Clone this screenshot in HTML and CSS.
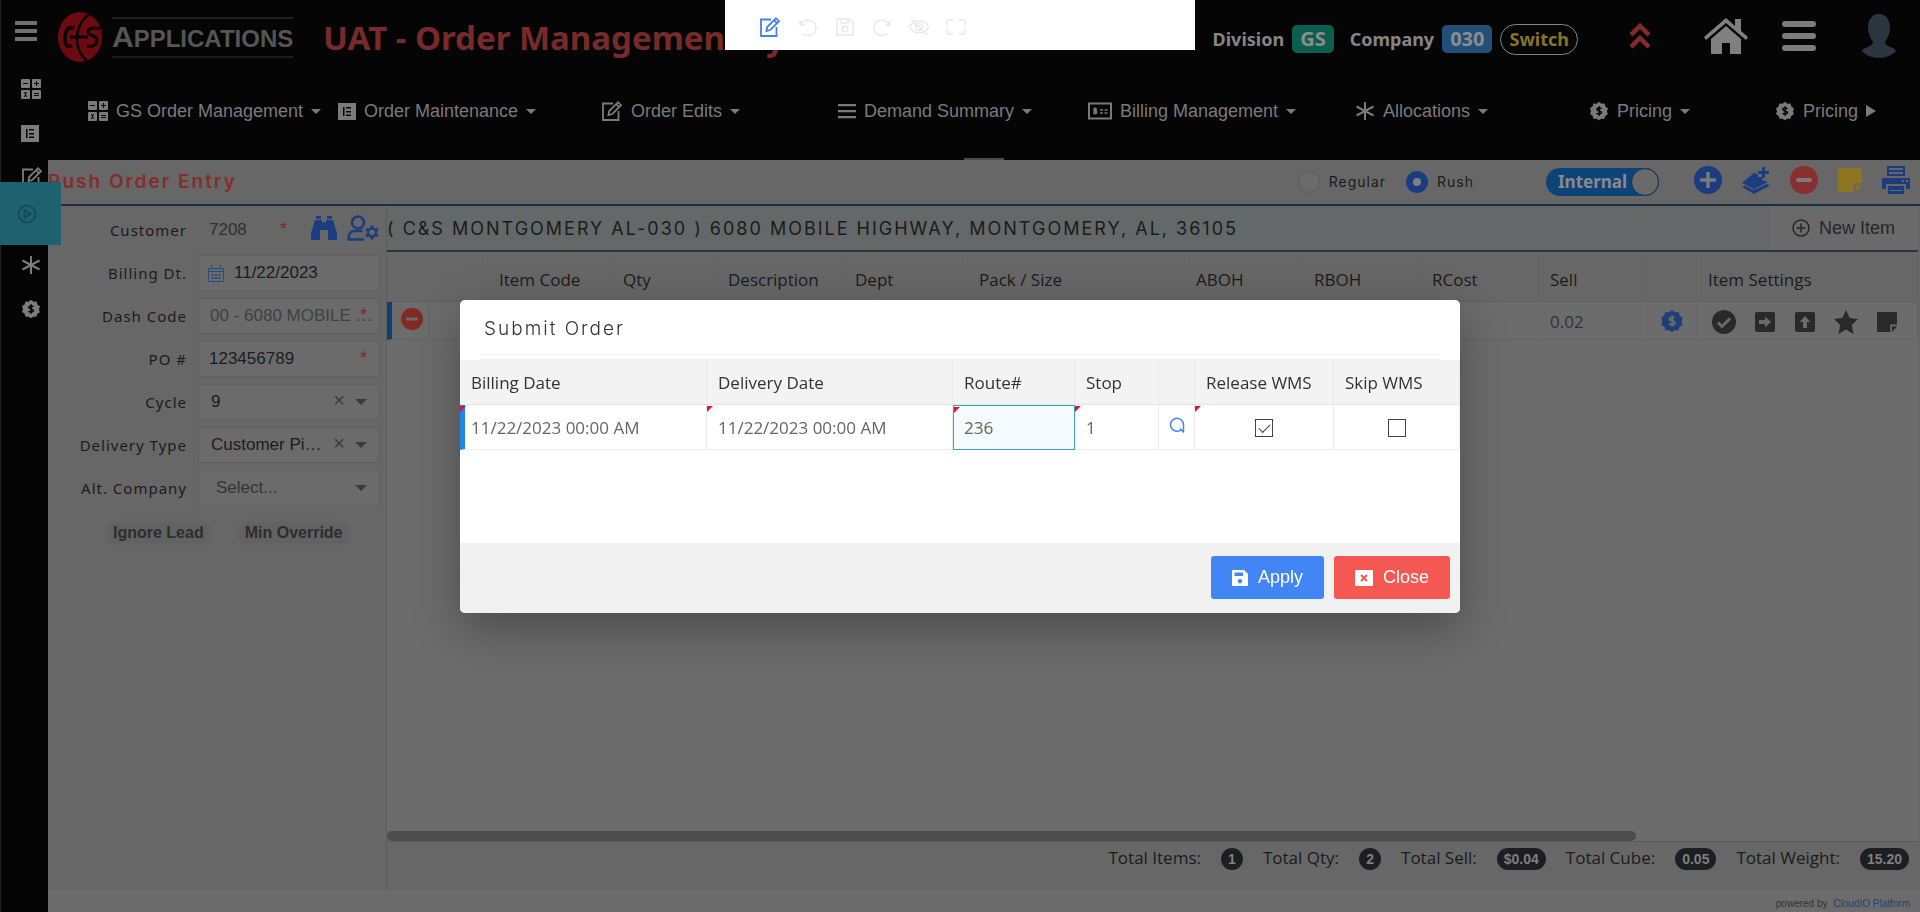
FILE: index.html
```html
<!DOCTYPE html>
<html lang="en">
<head>
<meta charset="utf-8">
<title>UAT - Order Management System</title>
<link rel="stylesheet" href="styles.css">
</head>
<body>
<svg class="defs" aria-hidden="true">
  <symbol id="i-grid" viewBox="0 0 20 20"><path fill-rule="evenodd" fill="currentColor" d="M1 0h7a1 1 0 0 1 1 1v7a1 1 0 0 1-1 1H1a1 1 0 0 1-1-1V1a1 1 0 0 1 1-1zM2 4v1h5V4zM12 0h7a1 1 0 0 1 1 1v7a1 1 0 0 1-1 1h-7a1 1 0 0 1-1-1V1a1 1 0 0 1 1-1zM15 2v2h-2v1h2v2h1V5h2V4h-2V2zM1 11h7a1 1 0 0 1 1 1v7a1 1 0 0 1-1 1H1a1 1 0 0 1-1-1v-7a1 1 0 0 1 1-1zM3 13l1 2.500-1 2.500h1l.5-1.500L5 18h1l-1-2.500L6 13H5l-.5 1.500L4 13zM12 11h7a1 1 0 0 1 1 1v7a1 1 0 0 1-1 1h-7a1 1 0 0 1-1-1v-7a1 1 0 0 1 1-1zM13 14v1h5v-1zM13 16v1h5v-1z"/></symbol>
  <symbol id="i-list" viewBox="0 0 18 18"><path fill-rule="evenodd" fill="currentColor" d="M0 1h18v17H0zM5 5v9h1.500V5zM8 5v1.500h5V5zM8 9v1.500h5V9zM8 12.500V14h5v-1.500z"/></symbol>
  <symbol id="i-edit" viewBox="0 0 22 22"><g fill="none" stroke="currentColor" stroke-width="1.800"><path d="M12 3.500H2V20h15.500v-9"/><path d="M7.500 15l.7-4L17 2.200l3 3L11.300 14z"/><path d="M15 4.200l3 3"/></g></symbol>
  <symbol id="i-bars" viewBox="0 0 18 16"><path fill="currentColor" d="M0 1h18v2.200H0zM0 7h18v2.200H0zM0 13h18v2.200H0z"/></symbol>
  <symbol id="i-bill" viewBox="0 0 24 18"><rect x="1" y="1.500" width="22" height="15" fill="none" stroke="currentColor" stroke-width="2"/><path fill="none" stroke="currentColor" stroke-width="1.500" d="M9 7H6v2h2.500v2H5M7.200 5.500v7M12 8h3M16.500 8h3M12 11h3M16.500 11h3"/></symbol>
  <symbol id="i-star6" viewBox="0 0 20 20"><path stroke="currentColor" stroke-width="2" d="M10 1v18M1.500 5.500l17 9M18.500 5.500l-17 9"/></symbol>
  <symbol id="i-seal" viewBox="0 0 24 24"><path fill="currentColor" d="M12 1l3 2.200 3.700-.1 1 3.500L22.800 9l-1.300 3.400 1.100 3.500-3.100 2-1.200 3.500-3.700-.1L12 23.200l-2.900-2-3.700.1-1.100-3.500-3.100-2.100 1.200-3.500L1.200 8.800l3.100-2.200 1-3.500L9 3.200z"/><path class="knock" fill="none" stroke-width="1.800" d="M15 9.200c-1-1.200-5.600-1.500-5.600.8 0 2.600 5.600 1.300 5.600 3.900 0 2.300-4.600 2.200-6 .7M12.200 6.200v11.600"/></symbol>
  <symbol id="i-play" viewBox="0 0 20 20"><g fill="none" stroke="currentColor" stroke-width="1.600"><circle cx="10" cy="10" r="8.500"/><path d="M7.500 6v8l6-4z"/></g></symbol>
  <symbol id="i-minus" viewBox="0 0 28 28"><circle cx="14" cy="14" r="14" fill="currentColor"/><path class="knock" stroke-width="4" stroke-linecap="round" d="M8 14h12"/></symbol>
  <symbol id="i-plus" viewBox="0 0 28 28"><circle cx="14" cy="14" r="14" fill="currentColor"/><path class="knock" stroke-width="3.500" d="M6 14h16M14 6v16"/></symbol>
  <symbol id="i-note" viewBox="0 0 24 24"><path fill="currentColor" d="M1 0h22a1 1 0 0 1 1 1v14h-8v9H1a1 1 0 0 1-1-1V1a1 1 0 0 1 1-1zM18 17h6l-6 7z"/></symbol>
</svg>

<header class="top">
  <div class="brand-row">
    <div class="logo">
      <svg class="logo-mark" viewBox="0 0 44 50" aria-hidden="true"><ellipse cx="22" cy="25" rx="22" ry="25" fill="#6b0a10"/><g fill="none" stroke="#0a0405"><path stroke-width="2.500" d="M33 1C15 13 15 37 29 49"/><path stroke-width="3.500" d="M16 16C9 14 7 20 7 27s3 8 7 7"/><path stroke-width="3" d="M12 25h18M42 17c-7-2-12-1-12 3s9 3 9 8-4 7-10 6"/></g></svg>
      <span class="logo-text"><b>A</b>PPLICATIONS</span>
    </div>
    <h1 class="app-title">UAT - Order Management System</h1>
    <div class="context">
      <span>Division</span><span class="tag tag-green">GS</span>
      <span class="ctx-company">Company</span><span class="tag tag-blue">030</span>
      <button class="switch" type="button">Switch</button>
    </div>
    <div class="top-icons">
      <button type="button" aria-label="Collapse" class="tb"><svg class="i-chev" viewBox="0 0 20 26"><path d="M1 12l9-9 9 9M1 24l9-9 9 9" fill="none" stroke="#842a2e" stroke-width="4.500"/></svg></button>
      <button type="button" aria-label="Home" class="tb"><svg class="i-home" viewBox="0 0 44 36"><path fill="#808080" d="M22 0l9 8V1h6v12l7 6-2 3L22 5 2 22l-2-3zM22 8l15 13v15H26V25h-8v11H7V21z"/></svg></button>
      <button type="button" aria-label="Menu" class="tb"><svg class="i-menu" viewBox="0 0 34 30"><path d="M3 3h28M3 15h28M3 27h28" stroke="#7c7c7c" stroke-width="6" stroke-linecap="round"/></svg></button>
      <button type="button" aria-label="Profile" class="tb"><svg class="i-user" viewBox="0 0 34 44"><path fill="#2b3640" d="M17 0c7 0 11 6 11 13 0 6-2 11-5 15 0 5 10 5 11 9-4 4-10 7-17 7S3 41 0 37c1-4 11-4 11-9-3-4-5-9-5-15C6 6 10 0 17 0z"/></svg></button>
    </div>
  </div>
  <nav class="nav">
    <a href="#"><svg class="ic20"><use href="#i-grid"/></svg>GS Order Management<i class="caret"></i></a>
    <a href="#"><svg class="ic18"><use href="#i-list"/></svg>Order Maintenance<i class="caret"></i></a>
    <a href="#"><svg class="ic22"><use href="#i-edit"/></svg>Order Edits<i class="caret"></i></a>
    <a href="#"><svg class="ic18"><use href="#i-bars"/></svg>Demand Summary<i class="caret"></i></a>
    <a href="#"><svg class="ic24"><use href="#i-bill"/></svg>Billing Management<i class="caret"></i></a>
    <a href="#"><svg class="ic20"><use href="#i-star6"/></svg>Allocations<i class="caret"></i></a>
    <a href="#"><svg class="ic20"><use href="#i-seal"/></svg>Pricing<i class="caret"></i></a>
    <a href="#"><svg class="ic20"><use href="#i-seal"/></svg>Pricing<i class="caret-right"></i></a>
  </nav>
  <span class="grip"></span>
</header>

<aside class="side">
  <button type="button" class="side-menu" aria-label="Toggle menu"><svg viewBox="0 0 22 20"><path d="M1 2h20M1 10h20M1 18h20" stroke="#707070" stroke-width="4" stroke-linecap="round"/></svg></button>
  <ul>
    <li><a href="#" aria-label="Order management"><svg class="ic20"><use href="#i-grid"/></svg></a></li>
    <li><a href="#" aria-label="Maintenance"><svg class="ic18"><use href="#i-list"/></svg></a></li>
    <li><a href="#" aria-label="Edits"><svg class="ic22"><use href="#i-edit"/></svg></a></li>
    <li><a href="#" class="current" aria-label="Run"><svg class="ic20"><use href="#i-play"/></svg></a></li>
    <li><a href="#" aria-label="Allocations"><svg class="ic20"><use href="#i-star6"/></svg></a></li>
    <li><a href="#" aria-label="Pricing"><svg class="ic20"><use href="#i-seal"/></svg></a></li>
  </ul>
</aside>

<main class="page">
  <section class="page-head">
    <h2>Rush Order Entry</h2>
    <label class="radio"><input type="radio" name="kind"><span>Regular</span></label>
    <label class="radio"><input type="radio" name="kind" checked><span>Rush</span></label>
    <label class="toggle"><span>Internal</span><input type="checkbox" checked></label>
    <div class="actions">
      <button type="button" aria-label="Add"><svg class="ic28 blue"><use href="#i-plus"/></svg></button>
      <button type="button" aria-label="Add layer"><svg class="ic28 blue" viewBox="0 0 28 28"><path fill="currentColor" d="M12 7l4 1.500V11h4v3l6 2-14 7-12-6zM0 21l3-1.500 9 4.500 13-6 3 1.500L12 28zM20 1h3v4h4v3h-4v4h-3V8h-4V5h4z"/></svg></button>
      <button type="button" aria-label="Remove"><svg class="ic28 red"><use href="#i-minus"/></svg></button>
      <button type="button" aria-label="Note"><svg class="ic24 yellow"><use href="#i-note"/></svg></button>
      <button type="button" aria-label="Print"><svg class="ic28 blue" viewBox="0 0 28 28"><path fill="currentColor" fill-rule="evenodd" d="M5 0h18v10H5zM7 2v2h14V2zM7 6v2h14V6zM0 12h28v11h-4v-5H4v5H0zM20 14v2h2v-2zM24 14v2h2v-2zM6 20h16v8H6zM8 25h12v-1H8z"/></svg></button>
    </div>
  </section>

  <div class="cols">
    <form class="panel">
      <div class="row"><label for="cust">Customer</label>
        <div class="field bare"><input id="cust" value="7208"><em>*</em>
          <button type="button" aria-label="Find"><svg class="ic26 blue" viewBox="0 0 26 24"><path fill="currentColor" d="M5 0h5v3H5zM16 0h5v3h-5zM4 4h7v5h4V4h7l4 13v7h-9V14H9v10H0v-7zM11.500 6h3v6h-3z"/></svg></button>
          <button type="button" aria-label="Customer settings"><svg class="i-cust blue" viewBox="0 0 32 26"><g fill="none" stroke="currentColor" stroke-width="2.500"><circle cx="11" cy="7.500" r="6"/><path d="M17 24.500H1.500c0-7 3-8.500 6-8.500h8"/><circle cx="25" cy="17.500" r="4"/></g><path stroke="currentColor" stroke-width="3" d="M25 10.500v3M25 21.500v3M19 14l2.500 1.500M28.500 19.500L31 21M19 21l2.500-1.500M28.500 15.500L31 14"/></svg></button>
        </div></div>
      <div class="row"><label for="bill">Billing Dt.</label>
        <div class="field"><svg class="i-cal" viewBox="0 0 16 17" aria-hidden="true"><g fill="none" stroke="currentColor"><path d="M.5 3.500h15v13H.5zM.5 6.500h15M3.500 0v4M12.500 0v4"/><path stroke-width="2" stroke-dasharray="2 1.500" d="M3.500 10h9.500M3.500 13h9.500"/></g></svg><input id="bill" value="11/22/2023"></div></div>
      <div class="row"><label for="dash">Dash Code</label>
        <div class="field muted"><input id="dash" value="00 - 6080 MOBILE HIGHWAY" readonly><em>*</em></div></div>
      <div class="row"><label for="po">PO #</label>
        <div class="field"><input id="po" value="123456789"><em>*</em></div></div>
      <div class="row"><label for="cycle">Cycle</label>
        <div class="field pick"><select id="cycle"><option>9</option></select><button type="button" class="clear" aria-label="Clear">×</button><i class="caret"></i></div></div>
      <div class="row"><label for="deliv">Delivery Type</label>
        <div class="field pick"><select id="deliv"><option>Customer Pickup</option></select><button type="button" class="clear" aria-label="Clear">×</button><i class="caret"></i></div></div>
      <div class="row"><label for="alt">Alt. Company</label>
        <div class="field pick empty"><select id="alt"><option>Select...</option></select><i class="caret"></i></div></div>
      <div class="flags"><button type="button">Ignore Lead</button><button type="button">Min Override</button></div>
    </form>

    <section class="order">
      <div class="addr"><h3>( C&amp;S MONTGOMERY AL-030 ) 6080 MOBILE HIGHWAY, MONTGOMERY, AL, 36105</h3>
        <button type="button" class="new-item"><svg class="ic18" viewBox="0 0 18 18"><g fill="none" stroke="currentColor" stroke-width="1.500"><circle cx="9" cy="9" r="8"/><path d="M4.500 9h9M9 4.500v9"/></g></svg>New Item</button></div>
      <div class="grid-wrap">
        <table class="items">
          <colgroup><col class="w42"><col class="w59"><col class="w124"><col class="w105"><col class="w127"><col class="w124"><col class="w217"><col class="w118"><col class="w118"><col class="w118"><col class="w108"><col class="w50"><col></colgroup>
          <thead><tr><th colspan="2"></th><th>Item Code</th><th>Qty</th><th>Description</th><th>Dept</th><th>Pack / Size</th><th>ABOH</th><th>RBOH</th><th>RCost</th><th>Sell</th><th></th><th>Item Settings</th></tr></thead>
          <tbody><tr><td class="first"><button type="button" aria-label="Remove item"><svg class="ic22 brick"><use href="#i-minus"/></svg></button></td><td></td><td></td><td></td><td></td><td></td><td></td><td></td><td></td><td></td><td>0.02</td>
            <td class="mid"><svg class="ic24 blue2"><use href="#i-seal"/></svg></td>
            <td><div class="sets">
              <svg class="ic24" viewBox="0 0 24 24"><circle cx="12" cy="12" r="12" fill="currentColor"/><path class="knock" fill="none" stroke-width="3" d="M6 12.500l4 4 8-8"/></svg>
              <svg class="ic20" viewBox="0 0 20 20"><rect width="20" height="20" rx="2" fill="currentColor"/><path class="knock-fill" d="M4 8h6V4.500l6 5.500-6 5.500V12H4z"/></svg>
              <svg class="ic20" viewBox="0 0 20 20"><rect width="20" height="20" rx="2" fill="currentColor"/><path class="knock-fill" d="M8 16v-6H4.500L10 4l5.500 6H12v6z"/></svg>
              <svg class="ic24" viewBox="0 0 24 24"><path fill="currentColor" d="M12 0l3.600 8 8.400 1-6.200 6 1.700 9-7.500-4.500L4.500 24l1.700-9L0 9l8.400-1z"/></svg>
              <svg class="ic20"><use href="#i-note"/></svg>
            </div></td></tr></tbody>
        </table>
        <div class="scroll"><span></span></div>
      </div>
      <div class="totals">
        <span>Total Items:</span><b>1</b><span>Total Qty:</span><b>2</b><span>Total Sell:</span><b>$0.04</b><span>Total Cube:</span><b>0.05</b><span>Total Weight:</span><b>15.20</b>
      </div>
    </section>
  </div>
  <footer class="foot">powered by <a href="#">CloudIO Platform</a></footer>
</main>

<div class="editbar">
  <button type="button" class="on" aria-label="Edit"><svg class="ic22"><use href="#i-edit"/></svg></button>
  <button type="button" aria-label="Undo"><svg class="ic20" viewBox="0 0 20 20"><path d="M2 3v5h5M2.500 8C6 1 18 2 18 10.500S9 20 4 16.500"/></svg></button>
  <button type="button" aria-label="Save"><svg class="ic20" viewBox="0 0 20 20"><path d="M2 2h12l4 4v12H2zM6 2v4h7V2"/><circle cx="10" cy="12" r="3"/></svg></button>
  <button type="button" aria-label="Redo"><svg class="ic20" viewBox="0 0 20 20"><path d="M18 3v5h-5M17.500 8C14 1 2 2 2 10.500S11 20 16 16.500"/></svg></button>
  <button type="button" aria-label="Hide"><svg class="ic20" viewBox="0 0 20 20"><path d="M0 10c5-8 15-8 20 0-5 8-15 8-20 0zM2 2l16 16"/><circle cx="10" cy="10" r="3.500"/></svg></button>
  <button type="button" aria-label="Expand"><svg class="ic20" viewBox="0 0 20 20"><path d="M7 3H1v5M1 12v5h6M13 3h6v5M19 12v5h-6"/></svg></button>
</div>

<div class="overlay">
  <div class="dialog" role="dialog" aria-labelledby="dlg">
    <h2 id="dlg">Submit Order</h2>
    <div class="rule"></div>
    <table class="submit">
      <colgroup><col class="w247"><col class="w246"><col class="w122"><col class="w84"><col class="w36"><col class="w139"><col></colgroup>
      <thead><tr><th>Billing Date</th><th>Delivery Date</th><th>Route#</th><th>Stop</th><th></th><th>Release WMS</th><th>Skip WMS</th></tr></thead>
      <tbody><tr><td class="req lead">11/22/2023 00:00 AM</td><td class="req">11/22/2023 00:00 AM</td><td class="req focus">236</td><td class="req">1</td>
        <td class="mid"><button type="button" aria-label="Look up stop"><svg class="i-find" viewBox="0 0 16 16"><path d="M12.500 12.500A6.500 6.500 0 1 1 14.500 8v7.500M11 11.500l4 4" fill="none" stroke="#4285f4" stroke-width="1.500"/></svg></button></td>
        <td class="req mid"><input type="checkbox" aria-label="Release WMS" checked></td><td class="mid"><input type="checkbox" aria-label="Skip WMS"></td></tr></tbody>
    </table>
    <div class="dialog-foot">
      <button type="button" class="btn apply"><svg class="ic16" viewBox="0 0 16 16"><path fill="#fff" fill-rule="evenodd" d="M1 0h11l4 4v11a1 1 0 0 1-1 1H1a1 1 0 0 1-1-1V1a1 1 0 0 1 1-1zM2.500 2.500v3.500H11V2.500zM8 9a2.200 2.200 0 1 0 .01 0z"/></svg>Apply</button>
      <button type="button" class="btn close"><svg class="ic18" viewBox="0 0 18 16"><rect width="18" height="16" rx="1" fill="#fff"/><path d="M6 5l6 6M12 5l-6 6" stroke="#f55753" stroke-width="2"/></svg>Close</button>
    </div>
  </div>
</div>
</body>
</html>
```
FILE: styles.css
```css
* { box-sizing: border-box; }
body {
  margin: 0;
  min-height: 100vh;
  display: grid;
  grid-template-columns: 48px minmax(0, 1fr);
  grid-template-rows: 160px 1fr;
  background: #050505;
  font-family: "Liberation Sans", Arial, sans-serif;
  color: #1b1b1b;
}
h1, h2, h3, ul { margin: 0; padding: 0; list-style: none; }
button { border: 0; padding: 0; background: none; font: inherit; color: inherit; }
a { color: inherit; text-decoration: none; }
svg { display: block; flex: none; }
.defs { position: absolute; width: 0; height: 0; }
.ic16 { width: 16px; height: 16px; }
.ic18 { width: 18px; height: 18px; }
.ic20 { width: 20px; height: 20px; }
.ic22 { width: 22px; height: 22px; }
.ic24 { width: 24px; height: 24px; }
.ic26 { width: 26px; height: 24px; }
.ic28 { width: 28px; height: 28px; }
.blue { color: #1c3c80; }
.blue2 { color: #1c3f7c; }
.red { color: #8a2f2f; }
.brick { color: #822b22; }
.yellow { color: #8c7420; }
.knock { stroke: var(--knock, #6a6a6a); }
.knock-fill { fill: #6a6a6a; }
.caret { width: 0; height: 0; border: 5px solid transparent; border-top-color: currentColor; border-bottom: 0; }
.caret-right { width: 0; height: 0; border: 6px solid transparent; border-left: 10px solid currentColor; border-right: 0; }

/* Header */
.top { grid-column: 2; grid-row: 1; position: relative; color: #7a7a7a; --knock: #050505; }
.brand-row { display: flex; align-items: center; height: 62px; padding-left: 10px; }
.logo { display: flex; align-items: center; gap: 10px; width: 265px; padding-top: 12px; }
.logo-mark { width: 44px; height: 50px; }
.logo-text {
  border-top: 2px solid #222;
  border-bottom: 2px solid #1c1c1c;
  font: bold 24px/35px "Liberation Sans", Arial, sans-serif;
  color: #555;
}
.logo-text b { font-size: 30px; }
.app-title { flex: 1; min-width: 0; padding-top: 14px; white-space: nowrap; font: bold 33px/44px "Noto Sans", sans-serif; color: #762a29; }
.context { display: flex; align-items: center; gap: 8px; padding-top: 16px; font: bold 18px/28px "Noto Sans", sans-serif; color: #858585; }
.ctx-company { margin-left: 8px; }
.tag { padding: 0 8px; border-radius: 5px; color: #8c8c8c; font-size: 20px; }
.tag-green { background: #0c5f50; }
.tag-blue { background: #214f78; }
.switch { height: 31px; padding: 0 8px; border: 1px solid #848484; border-radius: 16px; color: #857626; }
.top-icons { display: flex; align-items: center; gap: 34px; padding: 10px 24px 0 52px; }
.tb:first-child { margin-right: 20px; }
.tb:last-child { margin-left: 12px; }
.i-chev { width: 20px; height: 26px; }
.i-home { width: 44px; height: 36px; }
.i-menu { width: 34px; height: 30px; }
.i-user { width: 34px; height: 44px; }
.nav {
  display: grid;
  grid-template-columns: 250fr 263fr 237fr 250fr 267fr 234fr 186fr 145fr;
  align-items: center;
  height: 98px;
  padding-left: 40px;
  font-size: 18px;
}
.nav a { display: flex; align-items: center; gap: 8px; white-space: nowrap; }
.grip { position: absolute; left: 916px; bottom: 0; width: 40px; height: 2px; background: #4c4c4c; }

/* Sidebar */
.side { grid-column: 1; grid-row: 1 / 3; z-index: 2; position: relative; border-left: 1px solid #252525; background: #050505; color: #7c7c7c; --knock: #050505; }
.side-menu { display: block; width: 22px; margin: 21px 0 26px 14px; }
.side-menu svg { width: 22px; height: 20px; }
.side li { display: flex; height: 44px; padding-left: 20px; align-items: center; position: relative; }
.side .current { position: absolute; left: -1px; top: -17px; width: 61px; height: 63px; display: flex; align-items: center; padding-left: 17px; background: #1e616f; color: #174552; }

/* Page */
.page { grid-column: 2; grid-row: 2; display: flex; flex-direction: column; background: #676767; min-width: 0; }
.page-head { display: flex; align-items: center; height: 46px; border-bottom: 2px solid #1b2e42; padding-right: 10px; }
.page-head h2 { flex: 1; font: 600 19px/24px Inter, sans-serif; letter-spacing: 2px; color: #852d2d; }
.radio { display: flex; align-items: center; gap: 9px; margin-right: 20px; font: 14px/20px Inter, sans-serif; letter-spacing: 1px; }
.radio input { appearance: none; width: 22px; height: 22px; margin: 0; border: 1px solid #5e5e5e; border-radius: 50%; background: #6b6b6b; }
.radio input:checked { border: 7px solid #1c3c80; background: #808080; }
.toggle { display: flex; align-items: center; justify-content: space-between; width: 113px; height: 28px; margin-left: 52px; padding-left: 12px; border-radius: 14px; background: #0d4478; color: #8a8a8a; font: bold 17px/26px "Noto Sans", sans-serif; }
.toggle input { appearance: none; width: 28px; height: 28px; margin: 0; border: 1px solid #14304a; border-radius: 50%; background: #6a6a6a; }
.actions { display: flex; align-items: center; gap: 20px; margin-left: 35px; padding-bottom: 4px; }
.actions .red, .actions .blue { --knock: #7a7a7a; }
.cols { flex: 1; display: flex; min-width: 0; }

.panel { flex: none; width: 339px; padding: 6px 6px 0 0; border-right: 1px solid #5d5d5d; }
.row { display: flex; align-items: center; gap: 11px; height: 36px; margin-bottom: 7px; }
.row label { width: 139px; text-align: right; white-space: nowrap; font: 15px/24px "Noto Sans", sans-serif; letter-spacing: 1px; }
.field { position: relative; flex: 1; min-width: 0; height: 36px; display: flex; align-items: center; border: 1px solid #606060; background: #6b6b6b; }
.field input, .field select { flex: 1; min-width: 0; width: 100%; height: 34px; margin: 0; padding: 0 10px; border: 0; background: none; appearance: none; outline: 0; font: 17px/24px "Liberation Sans", Arial, sans-serif; color: #1c1c1c; text-overflow: ellipsis; }
.field em { position: absolute; right: 12px; top: 5px; color: #821f38; font: 18px/22px "Liberation Sans", Arial, sans-serif; }
.bare { border-color: transparent; background: none; gap: 10px; }
.bare input { color: #303030; }
.bare em { right: 92px; }
.bare button { margin-bottom: 4px; }
.i-cust { width: 32px; height: 26px; }
.i-cal { width: 16px; height: 17px; margin-left: 9px; color: #264b7c; }
.muted input { color: #404040; padding-right: 0; padding-left: 11px; }
.pick select { padding-right: 50px; padding-left: 12px; }
.pick.empty select { padding-left: 17px; color: #343434; }
.pick .caret { position: absolute; right: 12px; top: 14px; border-width: 6px 6px 0; color: #3a3a3a; }
.clear { position: absolute; right: 34px; top: 4px; font-size: 20px; line-height: 22px; color: #3a3a3a; }
.flags { display: flex; gap: 29px; padding: 10px 0 0 59px; font: bold 16px/20px "Liberation Sans", Arial, sans-serif; color: #2d2d2d; }
.flags button { padding: 0 6px; border-radius: 8px; background: #626262; box-shadow: 0 0 4px #626262; }

.order { flex: 1; min-width: 0; display: flex; flex-direction: column; padding-right: 2px; }
.addr { display: flex; align-items: center; height: 46px; border-bottom: 2px solid #2c3638; background: #646868; }
.addr h3 { flex: 1; padding-top: 2px; font: 400 18px/24px Inter, sans-serif; letter-spacing: 2px; white-space: nowrap; }
.new-item { display: flex; align-items: center; gap: 9px; width: 148px; height: 42px; padding-left: 22px; background: #6a6a6a; font-size: 18px; color: #262626; }
.grid-wrap { flex: 1; display: flex; flex-direction: column; margin-top: 4px; background: #6c6c6c; border-bottom: 1px solid #5a5a5a; }
table { width: 100%; table-layout: fixed; border-collapse: separate; border-spacing: 0; font: 17px/22px "Open Sans", sans-serif; }
th, td { padding: 2px 0 0 11px; text-align: left; font-weight: 400; white-space: nowrap; }
.items th { height: 46px; background: #676767; border-right: 1px solid #646464; border-bottom: 1px solid #616161; }
.items td { height: 38px; border-right: 1px solid #666; border-bottom: 1px solid #646464; color: #333; }
.items .first { border-left: 5px solid #10406c; padding-left: 9px; }
td.mid { text-align: center; padding: 0; }
.mid svg { margin: 0 auto; }
.sets { display: flex; align-items: center; justify-content: space-between; padding: 0 20px 0 4px; color: #292929; }
.w42 { width: 42px; } .w59 { width: 59px; } .w124 { width: 124px; } .w105 { width: 105px; } .w127 { width: 127px; }
.w217 { width: 217px; } .w118 { width: 118px; } .w108 { width: 108px; } .w50 { width: 50px; }
.w247 { width: 247px; } .w246 { width: 246px; } .w122 { width: 122px; } .w84 { width: 84px; } .w36 { width: 36px; } .w139 { width: 139px; }
.scroll { margin-top: auto; }
.scroll span { display: block; width: 81.6%; height: 10px; border-radius: 5px; background: #4d4d4d; }
.totals { display: flex; align-items: center; justify-content: flex-end; gap: 20px; height: 48px; padding: 0 9px 16px 0; font: 17px/22px "Open Sans", sans-serif; }
.totals b { min-width: 22px; margin-top: 2px; padding: 0 7px; border-radius: 11px; background: #1c1e22; color: #808080; text-align: center; font: bold 14px/22px "Liberation Sans", Arial, sans-serif; }
.foot { height: 22px; padding: 6px 10px 0 0; background: #6c6c6c; text-align: right; font-size: 10px; line-height: 16px; color: #333; }
.foot a { color: #1f426e; margin-left: 3px; }

/* Floating edit bar */
.editbar { position: fixed; z-index: 4; top: 0; left: 50%; width: 470px; height: 50px; margin-left: -235px; padding: 4px 0 0 34px; display: flex; align-items: center; gap: 17px; background: #fff; color: #e9e9e9; }
.editbar .on { color: #4a7fe8; }
.editbar path, .editbar circle { fill: none; stroke: currentColor; stroke-width: 1.5; }

/* Dialog */
.overlay { position: fixed; inset: 0; z-index: 3; display: flex; align-items: center; justify-content: center; }
.dialog { display: flex; flex-direction: column; width: 1000px; max-width: 90vw; min-height: 313px; border-radius: 5px; overflow: hidden; background: #fff; box-shadow: 0 16px 48px rgba(0, 0, 0, .3); }
.dialog h2 { padding: 17px 24px 13px; font: 300 19px/24px Inter, sans-serif; letter-spacing: 2px; color: #333; }
.rule { height: 6px; margin: 0 20px; border: 1px solid #f0f0f0; border-width: 1px 0; }
.submit th { height: 45px; background: #f3f3f3; color: #333; border-right: 1px solid #e9e9e9; border-bottom: 1px solid #e4e4e4; }
.submit td { position: relative; height: 45px; color: #666; border-right: 1px solid #ececec; border-bottom: 1px solid #ececec; }
.submit .lead { border-left: 5px solid #1e88e5; padding-left: 6px; }
.req::before { content: ""; position: absolute; left: 0; top: 1px; border: 3px solid #d8143c; border-right-color: transparent; border-bottom-color: transparent; }
.lead::before { left: -5px; }
.submit .focus { background: #f6fbff; border: 1px solid #3f9fc4; padding-left: 10px; }
.i-find { width: 16px; height: 16px; }
.submit input { appearance: none; display: inline-block; vertical-align: middle; width: 18px; height: 18px; margin: 0; border: 1px solid #444; background: #fff; }
.submit input:checked::before { content: ""; display: block; width: 10px; height: 5px; margin: 4px 0 0 3px; border: 1px solid #444; border-width: 0 0 1px 1px; transform: rotate(-45deg); }
.dialog-foot { display: flex; align-items: center; justify-content: flex-end; gap: 10px; height: 70px; margin-top: auto; padding-right: 10px; background: #f1f1f1; }
.btn { display: flex; align-items: center; justify-content: center; gap: 10px; height: 43px; padding: 0 21px; border-radius: 3px; color: #fff; font-size: 18px; }
.apply { background: #4285f4; }
.close { background: #f55753; }
```
